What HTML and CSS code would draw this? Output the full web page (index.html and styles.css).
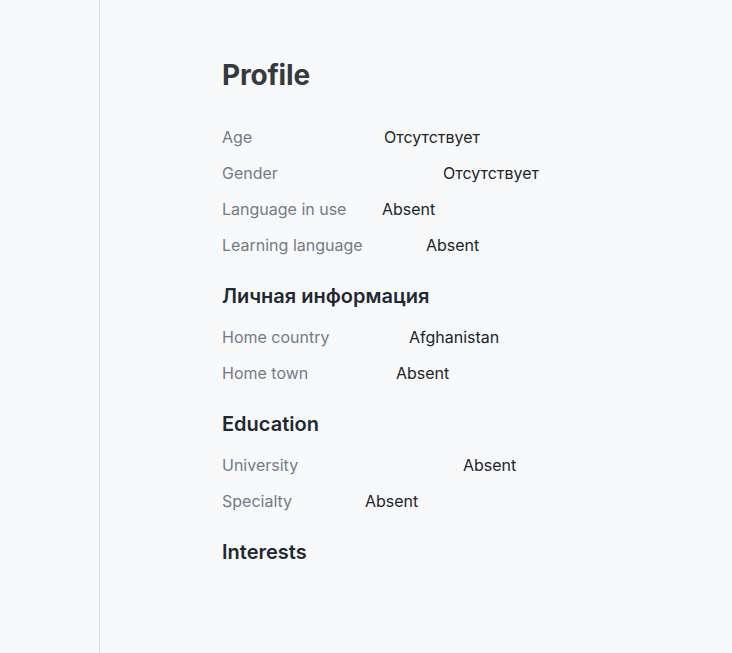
FILE: index.html
```html
<!DOCTYPE html>
<html>
<head>
<meta charset="utf-8">
<link rel="stylesheet" href="styles.css">
</head>
<body>
<div class="layout">
  <aside class="sidebar"></aside>
  <main class="main">
    <h1 class="title">Profile</h1>
    <div class="rows">
      <div class="row" style="--w:162px"><span class="label">Age</span><span class="value">Отсутствует</span></div>
      <div class="row" style="--w:221px"><span class="label">Gender</span><span class="value">Отсутствует</span></div>
      <div class="row" style="--w:160px"><span class="label">Language in use</span><span class="value">Absent</span></div>
      <div class="row" style="--w:204px"><span class="label">Learning language</span><span class="value">Absent</span></div>
    </div>
    <h2 class="section">Личная информация</h2>
    <div class="rows">
      <div class="row" style="--w:187px"><span class="label">Home country</span><span class="value">Afghanistan</span></div>
      <div class="row" style="--w:174px"><span class="label">Home town</span><span class="value">Absent</span></div>
    </div>
    <h2 class="section">Education</h2>
    <div class="rows">
      <div class="row" style="--w:241px"><span class="label">University</span><span class="value">Absent</span></div>
      <div class="row" style="--w:143px"><span class="label">Specialty</span><span class="value">Absent</span></div>
    </div>
    <h2 class="section">Interests</h2>
  </main>
</div>
</body>
</html>
```

FILE: styles.css
```css
* { box-sizing: border-box; }
html, body { margin: 0; padding: 0; height: 100%; }
body {
  background: #f8f9fb;
  font-family: Inter, "Noto Sans", sans-serif;
  color: #212529;
}
.layout {
  display: flex;
  min-height: 100vh;
}
.sidebar {
  width: 100px;
  flex: none;
  border-right: 1px solid #dcdee2;
}
.main {
  flex: 1;
  padding: 58px 0 0 122px;
}
.title {
  margin: 0 0 27px;
  font-size: 28px;
  line-height: 34px;
  font-weight: 700;
  color: #343a40;
  letter-spacing: -0.2px;
}
.row {
  display: flex;
  height: 36px;
  align-items: center;
  font-size: 16px;
}
.label {
  width: var(--w);
  flex: none;
  color: #737b85;
}
.value {
  color: #212529;
}
.section {
  margin: 21px 0 11px;
  font-size: 20px;
  line-height: 24px;
  font-weight: 600;
  color: #1f2933;
}
```
